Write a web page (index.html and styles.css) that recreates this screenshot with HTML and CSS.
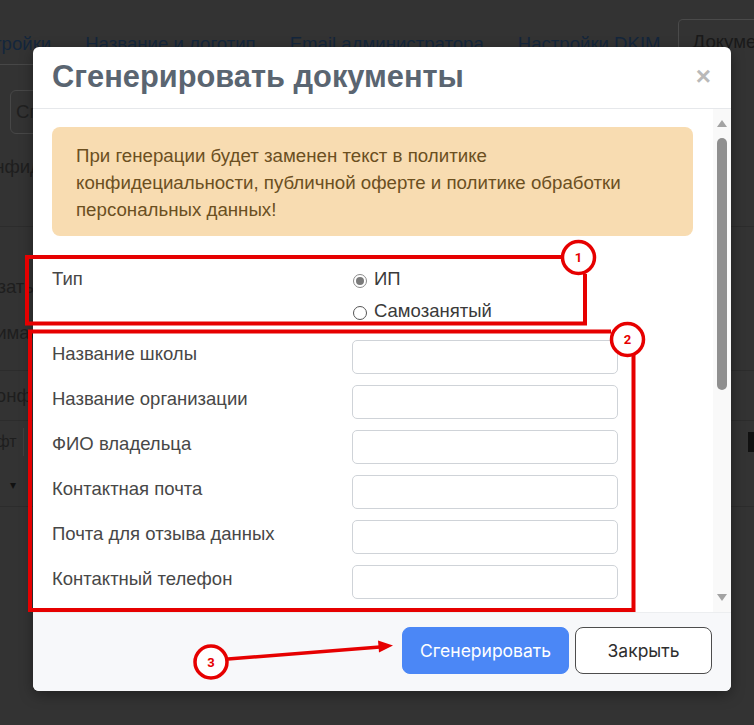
FILE: index.html
```html
<!DOCTYPE html>
<html lang="ru">
<head>
<meta charset="utf-8">
<title>Сгенерировать документы</title>
<link rel="stylesheet" href="styles.css">
</head>
<body>
<div class="page">
  <div class="tabs">
    <span class="tab tab-first">Настройки</span>
    <span class="tab">Название и логотип</span>
    <span class="tab">Email администратора</span>
    <span class="tab">Настройки DKIM</span>
    <span class="tab tab-active">Документы</span>
  </div>
  <div class="bg-content">
    <div class="bg-row bg-row-btn"><span class="bg-btn">Сгенерировать</span></div>
    <div class="bg-row bg-row-a"><span class="bg-text shift-a">Политика конфиденциальности</span></div>
    <div class="bg-row bg-row-b">
      <span class="bg-text shift-b">Показать</span>
      <span class="bg-text shift-c">Минимально</span>
    </div>
    <div class="bg-row bg-row-d"><span class="bg-text shift-d">Конфиденциальность</span></div>
    <div class="bg-row bg-row-e"><span class="bg-small shift-e">Шрифт</span><span class="bg-sep"></span><span class="bg-mark"></span></div>
    <div class="bg-row bg-row-f"><span class="bg-caret">▾</span></div>
  </div>
</div>

<div class="modal">
  <div class="modal-header">
    <h1 class="modal-title">Сгенерировать документы</h1>
    <span class="modal-close">×</span>
  </div>
  <div class="modal-body">
    <div class="modal-scroll">
      <div class="alert">При генерации будет заменен текст в политике конфидециальности, публичной оферте и политике обработки персональных данных!</div>
      <div class="type-row">
        <div class="label">Тип</div>
        <div class="radios">
          <label class="radio"><span class="radio-dot checked"></span>ИП</label>
          <label class="radio"><span class="radio-dot"></span>Самозанятый</label>
        </div>
      </div>
      <div class="form">
        <div class="form-row"><div class="label">Название школы</div><span class="input"></span></div>
        <div class="form-row"><div class="label">Название организации</div><span class="input"></span></div>
        <div class="form-row"><div class="label">ФИО владельца</div><span class="input"></span></div>
        <div class="form-row"><div class="label">Контактная почта</div><span class="input"></span></div>
        <div class="form-row"><div class="label">Почта для отзыва данных</div><span class="input"></span></div>
        <div class="form-row"><div class="label">Контактный телефон</div><span class="input"></span></div>
        <div class="form-row"><div class="label">Адрес</div><span class="input"></span></div>
      </div>
    </div>
    <div class="scrollbar">
      <span class="sb-arrow sb-up"></span>
      <span class="sb-thumb"></span>
      <span class="sb-space"></span>
      <span class="sb-arrow sb-down"></span>
    </div>
  </div>
  <div class="modal-footer">
    <button class="btn btn-primary">Сгенерировать</button>
    <button class="btn btn-outline">Закрыть</button>
  </div>
</div>

<svg class="marks" width="754" height="725" viewBox="0 0 754 725">
  <g fill="none" stroke="#e60000" stroke-width="4" stroke-linejoin="miter">
    <polyline points="562,257 27,257 27,323.5 585,323.5 585,274"/>
    <polyline points="611,331.5 30,331.5 30,610 633.5,610 633.5,355"/>
    <line x1="228" y1="659" x2="380" y2="647" stroke-width="3.5"/>
  </g>
  <polygon points="393,645.5 378,640.5 379,652.5" fill="#e60000"/>
  <g fill="#fff" stroke="#e60000" stroke-width="3.5">
    <circle cx="578.5" cy="257.5" r="16"/>
    <circle cx="627.5" cy="339.5" r="16"/>
    <circle cx="211" cy="662" r="16"/>
  </g>
  <g fill="#e60000" font-family="Roboto, sans-serif" font-weight="700" font-size="13" text-anchor="middle">
    <text x="578.5" y="262">1</text>
    <text x="627.5" y="344">2</text>
    <text x="211" y="666.5">3</text>
  </g>
</svg>
</body>
</html>
```
FILE: styles.css
```css
* { box-sizing: border-box; }
html, body { margin: 0; padding: 0; }
body {
  width: 754px;
  height: 725px;
  overflow: hidden;
  position: relative;
  background: #333333;
  font-family: "Liberation Sans", Arial, sans-serif;
}

/* dimmed page behind overlay */
.page { padding-top: 29px; }
.tabs {
  display: flex;
  height: 36px;
  border-bottom: 1px solid #474747;
  margin-left: -57px;
  white-space: nowrap;
}
.tab {
  padding: 1px 17px 0;
  line-height: 28px;
  font-size: 18.6px;
  color: #14263c;
  flex: none;
}
.tab-active {
  border: 1px solid #4a4a4a;
  border-bottom: none;
  border-radius: 5px 5px 0 0;
  padding: 4px 14px 0;
  color: #1a1a1a;
  margin-top: -10px;
  height: 46px;
  line-height: 36px;
  background: #333;
}
.bg-content { display: flex; flex-direction: column; }
.bg-row {
  display: flex;
  align-items: center;
  white-space: nowrap;
  color: #1b1b1b;
  font-size: 18.6px;
}
.bg-row-btn { height: 44px; margin-top: 25px; padding-left: 10px; }
.bg-btn {
  border: 1px solid #474747;
  border-radius: 6px;
  height: 44px;
  line-height: 42px;
  padding: 0 12px 0 5px;
  color: #202020;
}
.bg-row-a {
  height: 93px;
  align-items: flex-start;
  padding-top: 21px;
  line-height: 24px;
  border-bottom: 1px solid #2c2c2c;
}
.bg-row-b {
  height: 144px;
  flex-direction: column;
  align-items: flex-start;
  padding-top: 48px;
  gap: 22px;
  line-height: 24px;
  border-bottom: 1px solid #2c2c2c;
}
.bg-row-d { height: 50px; border-bottom: 1px solid #2c2c2c; }
.bg-row-e { height: 42px; }
.bg-row-f { height: 44px; border-bottom: 1px solid #2c2c2c; }
.bg-text { color: #1e1e1e; }
.bg-small { font-size: 16px; color: #1e1e1e; }
.shift-a { margin-left: -112px; }
.shift-b { margin-left: -45px; }
.shift-c { margin-left: -40px; }
.shift-d { margin-left: -15px; }
.shift-e { margin-left: -36px; margin-right: 6px; }
.bg-sep { width: 1px; height: 28px; background: #3f3f3f; }
.bg-mark {
  margin-left: auto;
  width: 6px;
  height: 20px;
  background: #111;
}
.bg-caret { margin-left: 10px; font-size: 12px; color: #111; }

/* modal */
.modal {
  position: absolute;
  left: 33px;
  top: 47px;
  width: 698px;
  height: 644px;
  background: #fff;
  border-radius: 6px;
  overflow: hidden;
  display: flex;
  flex-direction: column;
  box-shadow: 0 4px 14px rgba(0,0,0,0.35);
}
.modal-header {
  height: 62px;
  flex: none;
  border-bottom: 1px solid #e6e8eb;
  display: flex;
  align-items: center;
  justify-content: space-between;
  padding: 0 20px 2px 19px;
}
.modal-title {
  margin: 0;
  font-size: 30.8px;
  font-weight: 700;
  color: #5a6571;
}
.modal-close {
  font-size: 26px;
  font-weight: 700;
  color: #b9b9b9;
  line-height: 1;
  margin-top: -2px;
}
.modal-body {
  flex: 1;
  display: flex;
  overflow: hidden;
  min-height: 0;
}
.modal-scroll {
  flex: 1;
  padding: 18px 20px 0 19px;
  overflow: hidden;
}
.alert {
  background: #f8dcb1;
  color: #6b4f1f;
  border-radius: 8px;
  padding: 15px 24px 13px;
  font-size: 18.7px;
  line-height: 27px;
}
.type-row {
  display: flex;
  margin-top: 30px;
}
.label {
  width: 300px;
  flex: none;
  font-size: 18.5px;
  color: #474747;
  line-height: 26px;
}
.radios {
  display: flex;
  flex-direction: column;
  gap: 6px;
}
.radio {
  display: flex;
  align-items: center;
  font-size: 18.5px;
  color: #3a3a3a;
  line-height: 26px;
}
.radio-dot {
  width: 14px;
  height: 14px;
  border-radius: 50%;
  border: 1px solid #555;
  margin: 3px 7px 0 1px;
  background: #fff;
  position: relative;
}
.radio-dot.checked { border-color: #8a8a8a; }
.radio-dot.checked::after {
  content: "";
  position: absolute;
  left: 2px;
  top: 2px;
  width: 8px;
  height: 8px;
  border-radius: 50%;
  background: #7a7a7a;
}
.form {
  display: flex;
  flex-direction: column;
  gap: 11px;
  margin-top: 16px;
}
.form-row {
  display: flex;
  align-items: center;
  height: 34px;
}
.form-row .label { margin-top: -6px; }
.input {
  width: 266px;
  height: 34px;
  border: 1px solid #cfd3d8;
  border-radius: 5px;
  background: #fff;
}
.scrollbar {
  width: 18px;
  flex: none;
  background: #f9f9f9;
  display: flex;
  flex-direction: column;
  align-items: center;
  padding: 11px 0 11px;
}
.sb-arrow {
  width: 0;
  height: 0;
  border-left: 5px solid transparent;
  border-right: 5px solid transparent;
}
.sb-up { border-bottom: 7px solid #a3a3a3; }
.sb-down { border-top: 7px solid #a3a3a3; }
.sb-thumb {
  width: 10px;
  height: 252px;
  margin-top: 11px;
  border-radius: 5px;
  background: #8f8f8f;
}
.sb-space { flex: 1; }
.modal-footer {
  height: 79px;
  flex: none;
  background: #f7f8fa;
  border-top: 1px solid #eceef0;
  display: flex;
  justify-content: flex-end;
  align-items: flex-start;
  gap: 6px;
  padding: 14px 19px 0 0;
}
.btn {
  height: 47px;
  border-radius: 8px;
  font-family: Inter, "Liberation Sans", sans-serif;
  font-size: 17.5px;
  cursor: pointer;
}
.btn-primary {
  width: 167px;
  background: #4b87f6;
  border: 1px solid #4b87f6;
  color: #fff;
}
.btn-outline {
  width: 137px;
  background: #fff;
  border: 1px solid #4d4d4d;
  color: #2e2e2e;
}

.marks {
  position: absolute;
  left: 0;
  top: 0;
  pointer-events: none;
}
```
